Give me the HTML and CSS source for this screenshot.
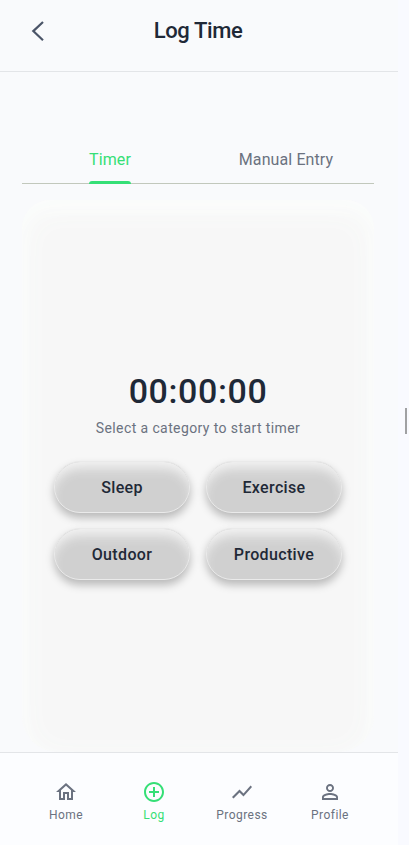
FILE: index.html
```
<!DOCTYPE html>
<html lang="en">
<head>
<meta charset="utf-8">
<title>Log Time</title>
<link rel="stylesheet" href="styles.css">
</head>
<body>
<div class="app">
  <header class="header">
    <svg class="back" viewBox="0 0 24 24"><path d="M18 3 8.3 12.1l9.7 9.1"/></svg>
    <h1>Log Time</h1>
  </header>
  <main class="main">
    <nav class="tabs">
      <div class="tab active"><span>Timer</span></div>
      <div class="tab"><span>Manual Entry</span></div>
    </nav>
    <section class="card">
      <div class="time">00:00:00</div>
      <p class="hint">Select a category to start timer</p>
      <div class="categories">
        <button>Sleep</button>
        <button>Exercise</button>
        <button>Outdoor</button>
        <button>Productive</button>
      </div>
    </section>
  </main>
  <nav class="bottom">
    <div class="item">
      <svg viewBox="0 0 24 24"><path d="M12 5.69l5 4.5V18h-2v-6H9v6H7v-7.81l5-4.5M12 3L2 12h3v8h6v-6h2v6h6v-8h3L12 3z"/></svg>
      <span>Home</span>
    </div>
    <div class="item active">
      <svg viewBox="0 0 24 24"><path d="M13 7h-2v4H7v2h4v4h2v-4h4v-2h-4V7zm-1-5C6.48 2 2 6.48 2 12s4.48 10 10 10 10-4.48 10-10S17.52 2 12 2zm0 18c-4.41 0-8-3.59-8-8s3.59-8 8-8 8 3.59 8 8-3.59 8-8 8z"/></svg>
      <span>Log</span>
    </div>
    <div class="item">
      <svg viewBox="0 0 24 24"><path d="M3.5 18.49l6-6.01 4 4L22 6.92l-1.41-1.41-7.09 7.97-4-4L2 16.99z"/></svg>
      <span>Progress</span>
    </div>
    <div class="item">
      <svg viewBox="0 0 24 24"><path d="M12 5.9c1.16 0 2.1.94 2.1 2.1s-.94 2.1-2.1 2.1S9.9 9.16 9.9 8s.94-2.1 2.1-2.1m0 9c2.97 0 6.1 1.46 6.1 2.1v1.1H5.9V17c0-.64 3.13-2.1 6.1-2.1M12 4C9.79 4 8 5.79 8 8s1.79 4 4 4 4-1.79 4-4-1.79-4-4-4zm0 9c-2.67 0-8 1.34-8 4v3h16v-3c0-2.66-5.33-4-8-4z"/></svg>
      <span>Profile</span>
    </div>
  </nav>
</div>
<div class="handle"></div>
</body>
</html>
```
FILE: styles.css
```
* { box-sizing: border-box; }
body {
  margin: 0;
  width: 409px;
  height: 845px;
  overflow: hidden;
  display: flex;
  align-items: flex-start;
  background: #f9faff;
  font-family: Roboto, sans-serif;
  color: #1f2937;
}
.app {
  width: 398px;
  height: 845px;
  display: flex;
  flex-direction: column;
  background: #f9fafc;
}
.header {
  height: 72px;
  flex: none;
  display: grid;
  grid-template-columns: 76px 1fr 76px;
  align-items: start;
  border-bottom: 1px solid #e3e5e8;
}
.back {
  width: 24px;
  height: 24px;
  margin: 19px 0 0 25px;
  fill: none;
  stroke: #4b5568;
  stroke-width: 2.2;
}
.header h1 {
  margin: 17px 2px 0 0;
  text-align: center;
  font-size: 22px;
  line-height: 28px;
  font-weight: 500;
  letter-spacing: -0.4px;
}
.main {
  flex: 1;
  min-height: 0;
  padding: 64px 24px 0 22px;
  display: flex;
  flex-direction: column;
}
.tabs {
  height: 48px;
  flex: none;
  display: flex;
  border-bottom: 1px solid #c2c8bc;
}
.tab {
  flex: 1;
  display: flex;
  justify-content: center;
  color: #6b7280;
  font-size: 16px;
  line-height: 47px;
  letter-spacing: 0.1px;
}
.tab span { height: 48px; }
.tab.active { color: #35df76; }
.tab.active span {
  display: flex;
  flex-direction: column;
}
.tab.active span::after {
  content: "";
  height: 3px;
  margin-top: -2px;
  flex: none;
  border-radius: 3px 3px 0 0;
  background: #35df76;
}
.card {
  flex: 1;
  margin-top: 16px;
  padding: 170px 32px 0;
  border-radius: 28px 28px 36px 36px;
  background: #f7f7f7;
  box-shadow: inset 0 8px 30px 2px #fafcfb, inset 0 8px 14px #fdfdfd;
  text-align: center;
}
.time {
  font-size: 34px;
  line-height: 42px;
  font-weight: 500;
  letter-spacing: 0.6px;
}
.hint {
  margin: 6px 0 0;
  font-size: 14px;
  line-height: 20px;
  letter-spacing: 0.4px;
  color: #6b7280;
}
.categories {
  margin-top: 23px;
  display: grid;
  grid-template-columns: 136px 136px;
  gap: 15px 16px;
}
.categories button {
  height: 52px;
  padding: 1px 0 0;
  border: 1px solid #eaeaea;
  border-radius: 26px;
  background: #d0d0d0;
  box-shadow: inset 0 10px 12px -4px #f4f4f4, 0 5px 9px rgba(0, 0, 0, 0.25);
  color: #1f2937;
  font: 500 16px/20px Roboto, sans-serif;
  letter-spacing: 0.35px;
}
.bottom {
  height: 93px;
  flex: none;
  display: flex;
  padding: 27px 24px 0 22px;
  border-top: 1px solid #e3e5e8;
  background: #fcfdff;
}
.item {
  flex: 1;
  display: flex;
  flex-direction: column;
  align-items: center;
  gap: 3px;
  color: #6b7280;
  font-size: 12px;
  line-height: 16px;
  letter-spacing: 0.45px;
}
.item svg { width: 24px; height: 24px; fill: currentColor; }
.item.active { color: #35df76; }
.handle {
  width: 2px;
  height: 26px;
  margin: 408px 0 0 7px;
  background: #a0a1a3;
}
```
